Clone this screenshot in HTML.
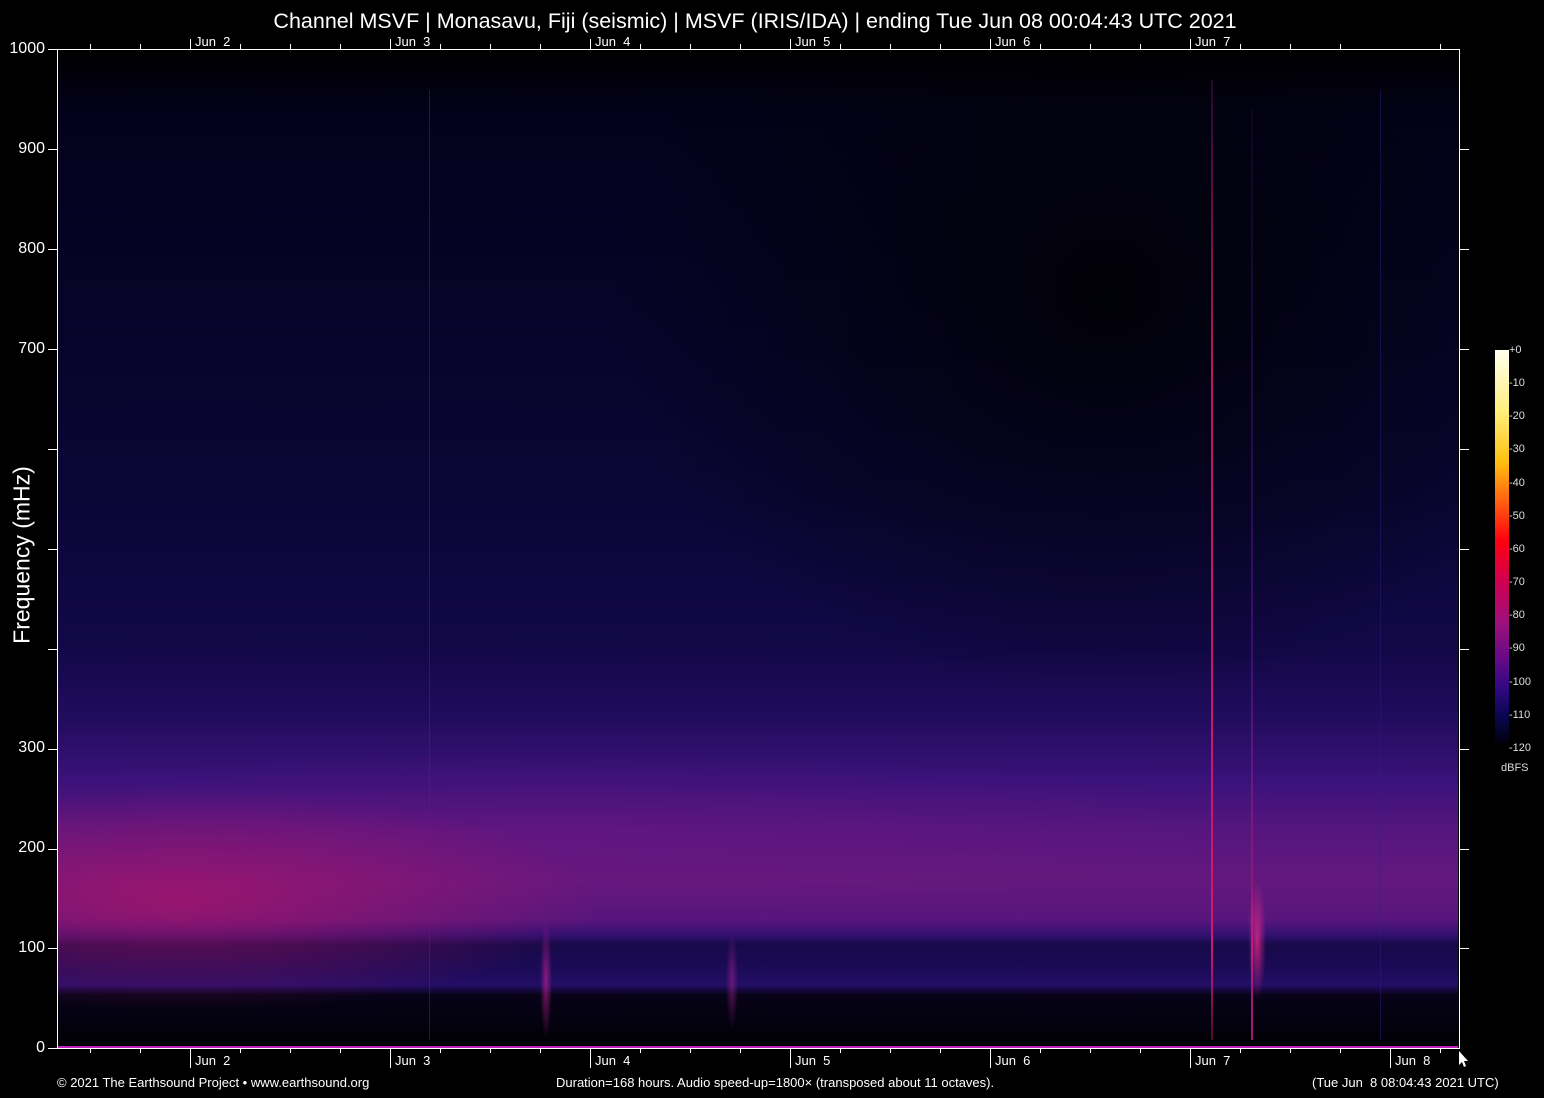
<!DOCTYPE html>
<html><head><meta charset="utf-8"><style>
body{margin:0;background:#000;width:1544px;height:1098px;overflow:hidden;position:relative;font-family:"Liberation Sans",sans-serif;color:#fff}
.t{position:absolute;white-space:nowrap}
#plot{position:absolute;left:58px;top:50px;width:1400px;height:998px;overflow:hidden;
background:
radial-gradient(ellipse 420px 110px at 120px 850px,rgba(190,20,100,.6),rgba(190,20,100,0)),
radial-gradient(ellipse 700px 80px at 500px 780px,rgba(130,20,130,.25),rgba(130,20,130,0)),
radial-gradient(ellipse 500px 400px at 1050px 250px,rgba(0,0,0,.8),rgba(0,0,0,0)),
linear-gradient(to bottom,#000 0,#03011a 60px,#060428 250px,#0a0636 450px,#120848 600px,#220c5e 670px,#3a127a 730px,#55167e 780px,#64187e 830px,#58167c 870px,#321070 885px,#160948 895px,#1c0b58 920px,#240e66 935px,#080318 945px,#02010c 980px,#000 998px);}
.vl{position:absolute;width:2px}
</style></head><body>
<div class="t" style="left:0;width:1510px;text-align:center;top:9px;font-size:21.5px">Channel MSVF | Monasavu, Fiji (seismic) | MSVF (IRIS/IDA) | ending Tue Jun 08 00:04:43 UTC 2021</div>
<div id="plot">
<div class="vl" style="left:1153px;top:30px;height:960px;background:linear-gradient(to bottom,rgba(120,20,120,.3),#c01560 30%,#d0186a 90%,rgba(200,20,100,.4))"></div>
<div class="vl" style="left:1193px;top:60px;height:930px;background:linear-gradient(to bottom,rgba(60,20,120,.2),rgba(90,20,140,.6) 60%,#a01870 90%)"></div>
<div style="position:absolute;left:1190px;top:830px;width:18px;height:120px;background:radial-gradient(ellipse 9px 60px at 50% 50%,rgba(230,40,140,.8),rgba(230,40,140,0))"></div>
<div style="position:absolute;left:482px;top:870px;width:12px;height:120px;background:radial-gradient(ellipse 6px 60px at 50% 50%,rgba(180,30,140,.7),rgba(180,30,140,0))"></div>
<div style="position:absolute;left:668px;top:880px;width:12px;height:100px;background:radial-gradient(ellipse 6px 50px at 50% 50%,rgba(150,30,140,.6),rgba(150,30,140,0))"></div>
<div class="vl" style="left:371px;top:40px;height:950px;width:1px;background:rgba(60,40,160,.5)"></div>
<div class="vl" style="left:1322px;top:40px;height:950px;width:1px;background:rgba(50,30,140,.4)"></div>
<div style="position:absolute;left:0;bottom:0;width:1400px;height:2px;background:#c020c0"></div>
</div>
<svg width="1544" height="1098" style="position:absolute;left:0;top:0" stroke="#fff" fill="none">
<path d="M57.5 49v1000M1459.5 49v1000M57 49.5h1403" stroke-width="1"/>
<g stroke-width="1">
<path d="M48 49.5h10M48 149.5h10M48 249.5h10M48 349.5h10M48 449.5h10M48 549.5h10M48 649.5h10M48 749.5h10M48 849.5h10M48 948.5h10M48 1048.5h10"/>
<path d="M1459 149.5h10M1459 249.5h10M1459 349.5h10M1459 449.5h10M1459 549.5h10M1459 649.5h10M1459 749.5h10M1459 849.5h10M1459 948.5h10"/>
<path d="M57 1048.5h1402"/>
<path d="M90.5 1048v5M140.5 1048v5M240.5 1048v5M290.5 1048v5M340.5 1048v5M440.5 1048v5M490.5 1048v5M540.5 1048v5M640.5 1048v5M690.5 1048v5M740.5 1048v5M840.5 1048v5M890.5 1048v5M940.5 1048v5M1040.5 1048v5M1090.5 1048v5M1140.5 1048v5M1240.5 1048v5M1290.5 1048v5M1340.5 1048v5M1440.5 1048v5"/>
<path d="M190.5 1048v20M390.5 1048v20M590.5 1048v20M790.5 1048v20M990.5 1048v20M1190.5 1048v20M1390.5 1048v20"/>
<path d="M90.5 44v5M140.5 44v5M240.5 44v5M290.5 44v5M340.5 44v5M440.5 44v5M490.5 44v5M540.5 44v5M640.5 44v5M690.5 44v5M740.5 44v5M840.5 44v5M890.5 44v5M940.5 44v5M1040.5 44v5M1090.5 44v5M1140.5 44v5M1240.5 44v5M1290.5 44v5M1340.5 44v5M1440.5 44v5"/>
<path d="M190.5 39v10M390.5 39v10M590.5 39v10M790.5 39v10M990.5 39v10M1190.5 39v10"/>
</g>
<path d="M1459 1051v14l3-3 2 5 2-1-2-5h4z" fill="#fff" stroke="none"/>
</svg>
<div style="font-size:16px">
<div class="t" style="right:1499px;top:40px">1000</div>
<div class="t" style="right:1499px;top:140px">900</div>
<div class="t" style="right:1499px;top:240px">800</div>
<div class="t" style="right:1499px;top:340px">700</div>
<div class="t" style="right:1499px;top:739px">300</div>
<div class="t" style="right:1499px;top:839px">200</div>
<div class="t" style="right:1499px;top:939px">100</div>
<div class="t" style="right:1499px;top:1039px">0</div>
</div>
<div class="t" style="top:555px;font-size:23px;transform:translate(-50%,-50%) rotate(-90deg);left:22px">Frequency (mHz)</div>
<div style="font-size:13px">
<div class="t" style="left:195px;top:34px">Jun&nbsp; 2</div><div class="t" style="left:395px;top:34px">Jun&nbsp; 3</div><div class="t" style="left:595px;top:34px">Jun&nbsp; 4</div><div class="t" style="left:795px;top:34px">Jun&nbsp; 5</div><div class="t" style="left:995px;top:34px">Jun&nbsp; 6</div><div class="t" style="left:1195px;top:34px">Jun&nbsp; 7</div>
<div class="t" style="left:195px;top:1053px">Jun&nbsp; 2</div><div class="t" style="left:395px;top:1053px">Jun&nbsp; 3</div><div class="t" style="left:595px;top:1053px">Jun&nbsp; 4</div><div class="t" style="left:795px;top:1053px">Jun&nbsp; 5</div><div class="t" style="left:995px;top:1053px">Jun&nbsp; 6</div><div class="t" style="left:1195px;top:1053px">Jun&nbsp; 7</div><div class="t" style="left:1395px;top:1053px">Jun&nbsp; 8</div>
</div>
<div style="font-size:13px">
<div class="t" style="left:57px;top:1075px">© 2021 The Earthsound Project • www.earthsound.org</div>
<div class="t" style="left:556px;top:1075px">Duration=168 hours. Audio speed-up=1800× (transposed about 11 octaves).</div>
<div class="t" style="left:1312px;top:1075px">(Tue Jun&nbsp; 8 08:04:43 2021 UTC)</div>
</div>
<div style="position:absolute;left:1495px;top:350px;width:14px;height:398px;background:linear-gradient(to bottom,#fffff0 0,#fff080 15%,#ffc010 28%,#ff6010 38%,#ff0010 48%,#d00050 58%,#a0107a 68%,#6a0a88 77%,#300880 85%,#0a0650 92%,#000 100%)"></div>
<div style="font-size:11px;color:#ddd">
<div class="t" style="left:1509px;top:344px">+0</div><div class="t" style="left:1509px;top:377px">-10</div><div class="t" style="left:1509px;top:410px">-20</div><div class="t" style="left:1509px;top:443px">-30</div><div class="t" style="left:1509px;top:477px">-40</div><div class="t" style="left:1509px;top:510px">-50</div><div class="t" style="left:1509px;top:543px">-60</div><div class="t" style="left:1509px;top:576px">-70</div><div class="t" style="left:1509px;top:609px">-80</div><div class="t" style="left:1509px;top:642px">-90</div><div class="t" style="left:1509px;top:676px">-100</div><div class="t" style="left:1509px;top:709px">-110</div><div class="t" style="left:1509px;top:742px">-120</div>
<div class="t" style="left:1501px;top:762px">dBFS</div>
</div>
</body></html>
